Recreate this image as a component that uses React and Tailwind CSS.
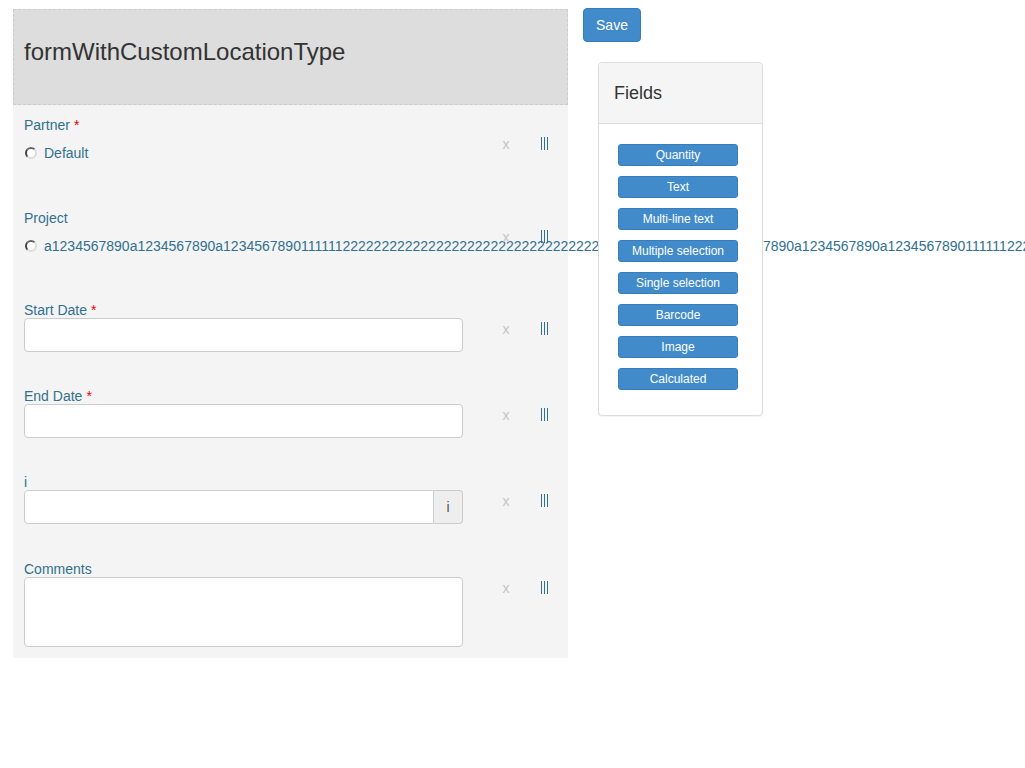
import React from "react";

const longText =
  "a1234567890a1234567890a1234567890111111" +
  "2".repeat(47) +
  "a1234567890a1234567890a1234567890111111" +
  "2".repeat(46);

const fieldTypes = [
  "Quantity",
  "Text",
  "Multi-line text",
  "Multiple selection",
  "Single selection",
  "Barcode",
  "Image",
  "Calculated",
];

const Handle = () => (
  <svg width="8" height="13" viewBox="0 0 8 13" className="block">
    <path d="M0.5 0v13M3.5 0v13M6.5 0v13" stroke="#31708f" strokeWidth="1" />
  </svg>
);

const RowTools = () => (
  <>
    <div className="ml-[37px] mt-[20px] flex h-[15px] w-[12px] items-center justify-center text-[14px] leading-none text-[#c4c4c4]">
      x
    </div>
    <div className="ml-[29px] mt-[21px] h-[13px]">
      <Handle />
    </div>
  </>
);

const Radio = () => (
  <span className="mr-[7px] inline-block h-[12px] w-[12px] shrink-0 rounded-full border-2 border-t-[#666] border-l-[#444] border-r-[#ddd] border-b-[#ddd] bg-white" />
);

const Label = ({ children, required }) => (
  <div className="flex h-[17px] items-center pt-[2px] text-[14px] text-[#31708f]">
    {children}
    {required && <span className="ml-[4px] text-[#e00]">*</span>}
  </div>
);

const RadioRow = ({ label, required, option, height }) => (
  <div className={`flex ${height}`}>
    <div className="w-[439px] shrink-0">
      <div className="flex h-[18px] items-center text-[14px] text-[#31708f]">
        {label}
        {required && <span className="ml-[4px] text-[#d00]">*</span>}
      </div>
      <div className="mt-[9px] flex h-[20px] items-center whitespace-nowrap pl-[1px] text-[14px] text-[#31708f]">
        <Radio />
        {option}
      </div>
    </div>
    <RowTools />
  </div>
);

const InputRow = ({ label, required, addon, height }) => (
  <div className={`flex ${height}`}>
    <div className="w-[439px] shrink-0">
      <Label required={required}>{label}</Label>
      <div className="flex h-[34px]">
        <div
          className={`flex-1 border border-[#ccc] bg-white ${
            addon ? "rounded-l-[4px]" : "rounded-[4px]"
          }`}
        />
        {addon && (
          <div className="flex w-[29px] items-center justify-center rounded-r-[4px] border border-l-0 border-[#ccc] bg-[#eee] text-[14px]">
            <span className="text-[#555555]">{addon}</span>
          </div>
        )}
      </div>
    </div>
    <RowTools />
  </div>
);

export default function App() {
  return (
    <div className="min-h-screen w-full overflow-hidden bg-white font-['Liberation_Sans',Arial,sans-serif]">
      <div className="flex items-start">
        <div className="ml-[13px] mt-[9px] w-[555px] shrink-0">
          <div className="flex h-[96px] items-center border border-dashed border-[#ccc] bg-[#ddd] px-[10px] pb-[10px]">
            <h1 className="text-[24px] leading-[1.1] text-[#333]">
              formWithCustomLocationType
            </h1>
          </div>
          <div className="bg-[#f4f4f4] pl-[11px] pt-[11px] pb-[11px]">
            <RadioRow label="Partner" required option="Default" height="h-[93px]" />
            <RadioRow label="Project" option={longText} height="h-[92px]" />
            <InputRow label="Start Date" required height="h-[86px]" />
            <InputRow label="End Date" required height="h-[86px]" />
            <InputRow label="i" addon="i" height="h-[87px]" />
            <div className="flex h-[87px]">
              <div className="w-[439px] shrink-0">
                <Label>Comments</Label>
                <div className="h-[70px] rounded-[4px] border border-[#ccc] bg-white" />
              </div>
              <RowTools />
            </div>
          </div>
        </div>

        <div className="ml-[15px] mt-[8px] shrink-0">
          <button className="h-[34px] w-[58px] rounded-[4px] border border-[#357ebd] bg-[#428bca] text-[14px] text-white">
            Save
          </button>
          <div className="relative ml-[15px] mt-[20px] w-[165px] rounded-[4px] border border-[#ddd] bg-white shadow-[0_1px_1px_rgba(0,0,0,0.05)]">
            <div className="flex h-[61px] items-center rounded-t-[4px] border-b border-[#ddd] bg-[#f5f5f5] px-[15px]">
              <h3 className="text-[18px] leading-none text-[#333]">Fields</h3>
            </div>
            <div className="flex flex-col gap-[10px] pl-[19px] pt-[20px] pb-[25px]">
              {fieldTypes.map((f) => (
                <button
                  key={f}
                  className="h-[22px] w-[120px] rounded-[3px] border border-[#357ebd] bg-[#428bca] text-[12px] leading-none text-white"
                >
                  {f}
                </button>
              ))}
            </div>
          </div>
        </div>
      </div>
    </div>
  );
}
